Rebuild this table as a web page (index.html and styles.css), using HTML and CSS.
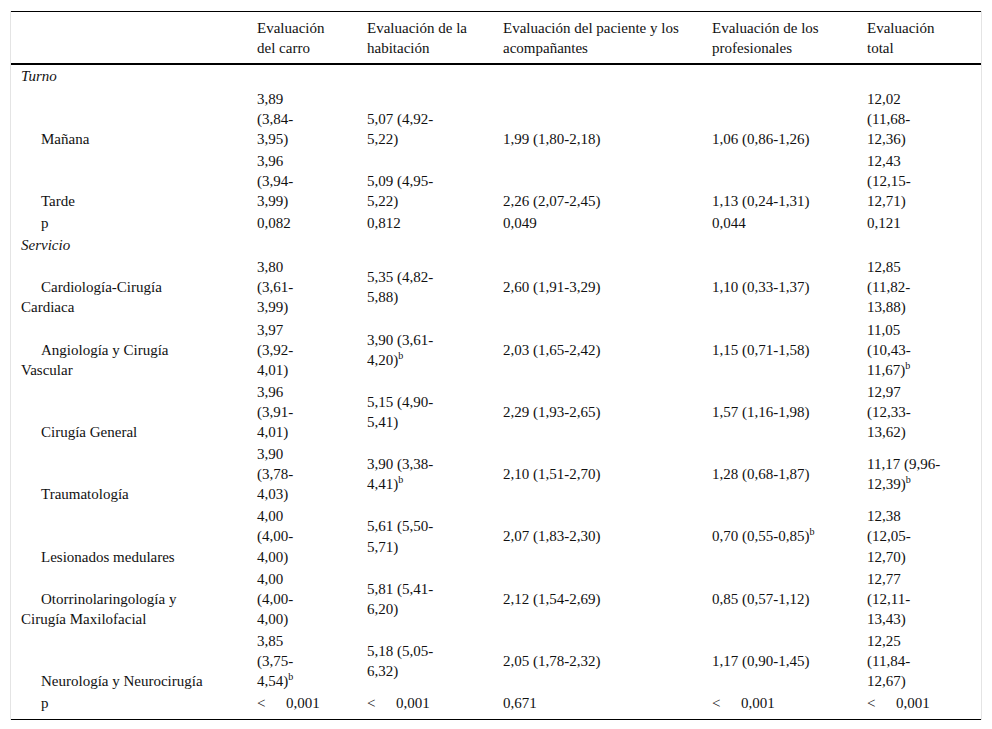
FILE: index.html
```html
<!DOCTYPE html>
<html lang="es">
<head>
<meta charset="utf-8">
<title>Tabla</title>
<link rel="stylesheet" href="styles.css">
</head>
<body>
<div class="frame">
<table class="data">
  <colgroup>
    <col class="c1"><col class="c2"><col class="c3"><col class="c4"><col class="c5"><col class="c6">
  </colgroup>
  <thead>
    <tr>
      <th></th>
      <th>Evaluación<br>del carro</th>
      <th>Evaluación de la<br>habitación</th>
      <th>Evaluación del paciente y los<br>acompañantes</th>
      <th>Evaluación de los<br>profesionales</th>
      <th>Evaluación<br>total</th>
    </tr>
  </thead>
  <tbody>
    <tr class="group"><td class="lbl"><em>Turno</em></td><td></td><td></td><td></td><td></td><td></td></tr>
    <tr class="bottom">
      <td class="lbl ind">Mañana</td>
      <td>3,89<br>(3,84-<br>3,95)</td>
      <td>5,07 (4,92-<br>5,22)</td>
      <td>1,99 (1,80-2,18)</td>
      <td>1,06 (0,86-1,26)</td>
      <td>12,02<br>(11,68-<br>12,36)</td>
    </tr>
    <tr class="bottom">
      <td class="lbl ind">Tarde</td>
      <td>3,96<br>(3,94-<br>3,99)</td>
      <td>5,09 (4,95-<br>5,22)</td>
      <td>2,26 (2,07-2,45)</td>
      <td>1,13 (0,24-1,31)</td>
      <td>12,43<br>(12,15-<br>12,71)</td>
    </tr>
    <tr class="bottom">
      <td class="lbl ind">p</td>
      <td>0,082</td>
      <td>0,812</td>
      <td>0,049</td>
      <td>0,044</td>
      <td>0,121</td>
    </tr>
    <tr class="group"><td class="lbl"><em>Servicio</em></td><td></td><td></td><td></td><td></td><td></td></tr>
    <tr class="mid">
      <td class="lbl ind">Cardiología-Cirugía<br>Cardiaca</td>
      <td>3,80<br>(3,61-<br>3,99)</td>
      <td>5,35 (4,82-<br>5,88)</td>
      <td>2,60 (1,91-3,29)</td>
      <td>1,10 (0,33-1,37)</td>
      <td>12,85<br>(11,82-<br>13,88)</td>
    </tr>
    <tr class="mid">
      <td class="lbl ind">Angiología y Cirugía<br>Vascular</td>
      <td>3,97<br>(3,92-<br>4,01)</td>
      <td>3,90 (3,61-<br>4,20)<sup>b</sup></td>
      <td>2,03 (1,65-2,42)</td>
      <td>1,15 (0,71-1,58)</td>
      <td>11,05<br>(10,43-<br>11,67)<sup>b</sup></td>
    </tr>
    <tr class="mid">
      <td class="lbl ind">Cirugía General</td>
      <td>3,96<br>(3,91-<br>4,01)</td>
      <td>5,15 (4,90-<br>5,41)</td>
      <td>2,29 (1,93-2,65)</td>
      <td>1,57 (1,16-1,98)</td>
      <td>12,97<br>(12,33-<br>13,62)</td>
    </tr>
    <tr class="mid">
      <td class="lbl ind">Traumatología</td>
      <td>3,90<br>(3,78-<br>4,03)</td>
      <td>3,90 (3,38-<br>4,41)<sup>b</sup></td>
      <td>2,10 (1,51-2,70)</td>
      <td>1,28 (0,68-1,87)</td>
      <td>11,17 (9,96-<br>12,39)<sup>b</sup></td>
    </tr>
    <tr class="mid">
      <td class="lbl ind">Lesionados medulares</td>
      <td>4,00<br>(4,00-<br>4,00)</td>
      <td>5,61 (5,50-<br>5,71)</td>
      <td>2,07 (1,83-2,30)</td>
      <td>0,70 (0,55-0,85)<sup>b</sup></td>
      <td>12,38<br>(12,05-<br>12,70)</td>
    </tr>
    <tr class="mid">
      <td class="lbl ind">Otorrinolaringología y<br>Cirugía Maxilofacial</td>
      <td>4,00<br>(4,00-<br>4,00)</td>
      <td>5,81 (5,41-<br>6,20)</td>
      <td>2,12 (1,54-2,69)</td>
      <td>0,85 (0,57-1,12)</td>
      <td>12,77<br>(12,11-<br>13,43)</td>
    </tr>
    <tr class="mid">
      <td class="lbl ind">Neurología y Neurocirugía</td>
      <td>3,85<br>(3,75-<br>4,54)<sup>b</sup></td>
      <td>5,18 (5,05-<br>6,32)</td>
      <td>2,05 (1,78-2,32)</td>
      <td>1,17 (0,90-1,45)</td>
      <td>12,25<br>(11,84-<br>12,67)</td>
    </tr>
    <tr class="bottom last">
      <td class="lbl ind">p</td>
      <td><span class="lt">&lt;</span>0,001</td>
      <td><span class="lt">&lt;</span>0,001</td>
      <td>0,671</td>
      <td><span class="lt">&lt;</span>0,001</td>
      <td><span class="lt">&lt;</span>0,001</td>
    </tr>
  </tbody>
</table>
</div>
</body>
</html>
```

FILE: styles.css
```css
html, body {
  margin: 0;
  padding: 0;
  background: #ffffff;
}

body {
  font-family: "Liberation Serif", "Times New Roman", serif;
  font-size: 15px;
  color: #111111;
}

.frame {
  margin: 11px 0 0 10px;
  width: 970px;
  border-left: 1px solid #e4e4e4;
  border-right: 1px solid #e4e4e4;
}

.data {
  width: 970px;
  table-layout: fixed;
  border-collapse: collapse;
  border-top: 1px solid #000000;
  border-bottom: 1px solid #000000;
}

.c1 { width: 236px; }
.c2 { width: 110px; }
.c3 { width: 136px; }
.c4 { width: 209px; }
.c5 { width: 155px; }
.c6 { width: 124px; }

.data th {
  font-weight: normal;
  text-align: left;
  vertical-align: top;
  line-height: 20.2px;
  padding: 6px 10px 5px 10px;
  white-space: nowrap;
  border-bottom: 2px solid #000000;
}

.data td {
  text-align: left;
  line-height: 20.1px;
  padding: 1px 10px 1px 10px;
  white-space: nowrap;
}

.data tr.bottom td {
  vertical-align: bottom;
}

.data tr.mid td {
  vertical-align: middle;
}

.data tr.mid td.lbl,
.data tr.group td.lbl {
  vertical-align: bottom;
}

.data tr.last td {
  vertical-align: top;
  padding-bottom: 6px;
}

.data td.ind {
  text-indent: 20px;
}

.data sup {
  font-size: 10px;
  line-height: 0;
  vertical-align: 6px;
}

.lt {
  display: inline-block;
  width: 29px;
  text-indent: 0;
}
```
